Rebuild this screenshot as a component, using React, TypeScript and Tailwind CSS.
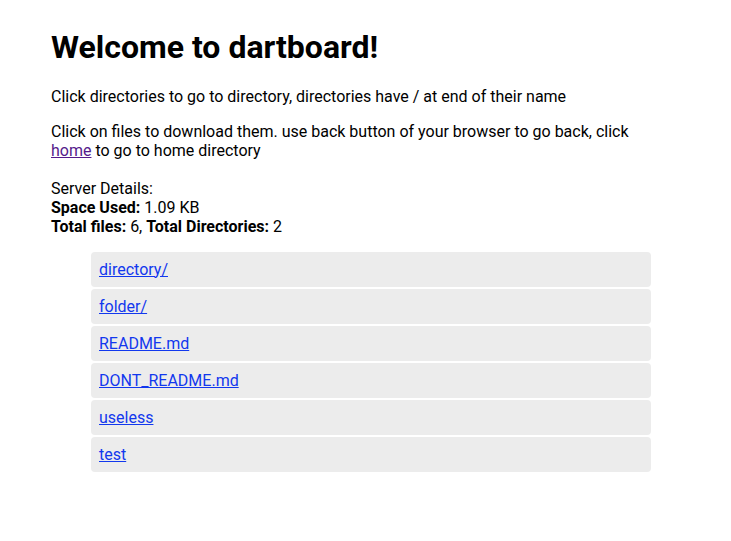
import React from "react";

const items = ["directory/", "folder/", "README.md", "DONT_README.md", "useless", "test"];

export default function App() {
  return (
    <div className="min-h-[541px] w-full bg-white text-black" style={{ fontFamily: "Roboto, 'Liberation Sans', sans-serif" }}>
      <div className="ml-[51px] w-[600px] pt-[28px]">
        <h1 className="text-[32px] font-bold leading-[38px]">Welcome to dartboard!</h1>
        <p className="mt-[21px] text-[16px] leading-[19px]">
          Click directories to go to directory, directories have / at end of their name
        </p>
        <p className="mt-[16px] text-[16px] leading-[19px]">
          Click on files to download them. use back button of your browser to go back, click{" "}
          <a href="#" className="text-[#551a8b] underline">home</a> to go to home directory
        </p>
        <div className="mt-[19px] text-[16px] leading-[19px]">
          Server Details:
          <br />
          <b>Space Used:</b> 1.09 KB
          <br />
          <b>Total files:</b> 6, <b>Total Directories:</b> 2
        </div>
        <ul className="mt-[16px] flex flex-col gap-[2px] pl-[40px]">
          {items.map((it) => (
            <li key={it} className="flex h-[35px] items-center rounded-[4px] bg-[#ececec] px-[8px] text-[16px]">
              <a href="#" className="text-[#1238ee] underline">{it}</a>
            </li>
          ))}
        </ul>
      </div>
    </div>
  );
}
